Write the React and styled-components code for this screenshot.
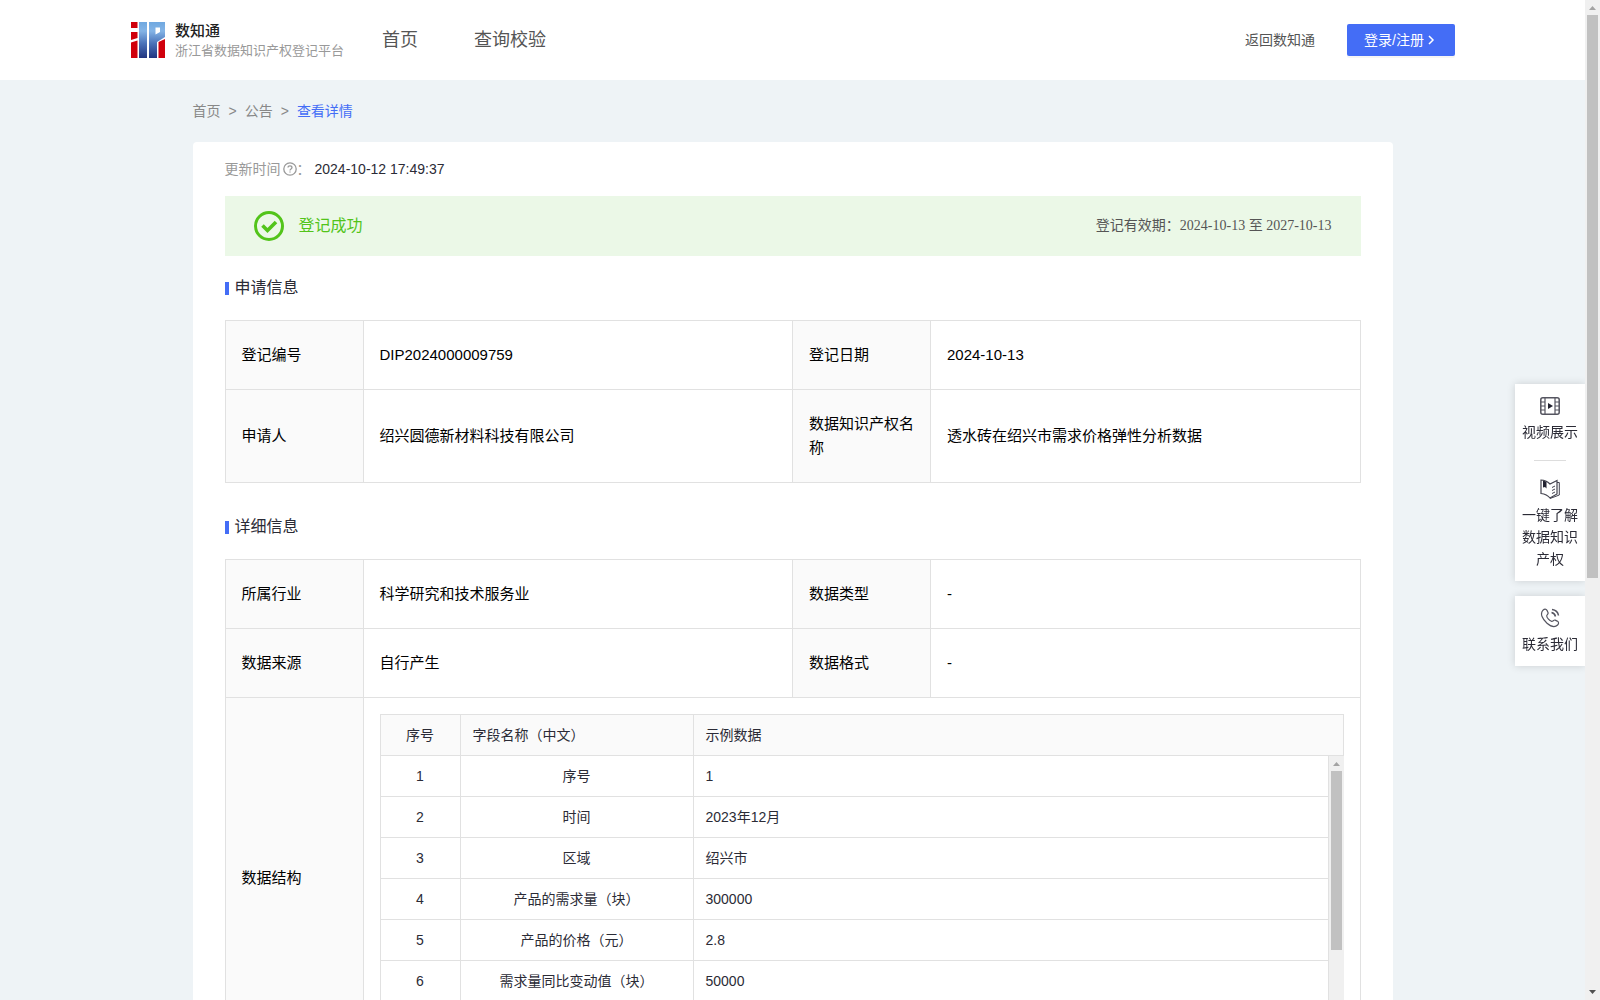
import React from 'react';
import styled, { createGlobalStyle } from 'styled-components';

const sans = '"Liberation Sans", "Noto Sans CJK SC", sans-serif';
const serif = '"Liberation Serif", "Noto Sans CJK SC", serif';

const GlobalStyle = createGlobalStyle`
  * {
    box-sizing: border-box;
  }
  body {
    margin: 0;
    background: #eef3f6;
    color: #2b2b36;
    font: 14px/22px ${sans};
  }
  a {
    color: inherit;
    text-decoration: none;
  }
`;

const Viewport = styled.div`
  display: flex;
  height: 100vh;
`;

const Page = styled.div`
  flex: 1;
  min-width: 0;
  overflow-y: auto;
  scrollbar-width: none;
`;

const ScrollTrack = styled.div`
  display: flex;
  flex: none;
  flex-direction: column;
  width: 15px;
  background: #f0f0f0;

  svg {
    flex: none;
  }
`;

const ThumbArea = styled.div`
  flex: 1;
  padding: 0 2px;
`;

const Thumb = styled.div`
  height: ${(p) => p.$size};
  background: #c1c1c1;
`;

const Header = styled.header`
  display: flex;
  align-items: center;
  height: 80px;
  padding: 0 130px;
  background: #fff;
`;

const Brand = styled.a`
  display: flex;
  align-items: center;
  gap: 10px;
`;

const BrandText = styled.div`
  font-family: "Noto Sans CJK SC", sans-serif;
  font-size: 13px;
  line-height: 20px;
  color: #999;
  white-space: nowrap;

  strong {
    display: block;
    font-size: 15px;
    font-weight: 500;
    color: #222;
  }
`;

const Nav = styled.nav`
  display: flex;
  flex: 1;
  gap: 56px;
  margin-left: 38px;
  font-size: 18px;
  color: #555;
`;

const BackLink = styled.a`
  margin-right: 32px;
  color: #555;
`;

const LoginButton = styled.button`
  display: flex;
  align-items: center;
  justify-content: center;
  width: 108px;
  height: 32px;
  padding: 0;
  border: 0;
  border-radius: 2px;
  background: #446df6;
  box-shadow: 0 2px 0 rgba(0, 0, 0, 0.04);
  color: #fff;
  font: 14px/22px ${sans};
  cursor: pointer;
`;

const Main = styled.main`
  width: 1200px;
  max-width: 100%;
  margin: 0 auto;
`;

const Breadcrumb = styled.nav`
  display: flex;
  gap: 8px;
  padding: 20px 0;
  color: #888;
`;

const Current = styled.span`
  color: #446df6;
`;

const Card = styled.article`
  padding: 16px 32px 32px;
  border-radius: 4px;
  background: #fff;
`;

const Updated = styled.div`
  display: flex;
  align-items: center;
  color: #999;

  svg {
    margin-left: 2px;
  }
  time {
    margin-left: 4px;
    color: #2b2b36;
  }
`;

const Banner = styled.div`
  display: flex;
  align-items: center;
  height: 60px;
  margin-top: 16px;
  padding: 0 29px;
  background: #ebf8e7;
`;

const Status = styled.strong`
  flex: 1;
  margin-left: 15px;
  font-size: 16px;
  font-weight: 400;
  color: #52c41a;
`;

const Validity = styled.span`
  font-family: ${serif};
  color: #555;
`;

const SectionTitle = styled.h2`
  display: flex;
  align-items: center;
  gap: 6px;
  margin: ${(p) => (p.$first ? 20 : 32)}px 0 20px;
  font-size: 16px;
  font-weight: 400;
  line-height: 24px;

  &::before {
    content: '';
    width: 4px;
    height: 13px;
    background: #446df6;
  }
`;

const InfoTable = styled.table`
  width: 100%;
  border-collapse: collapse;
  table-layout: fixed;
  font-size: 15px;
  line-height: 24px;
  color: #000;
`;

const Label = styled.th`
  width: 138px;
  padding: 22px 16px;
  border: 1px solid #e1e1e1;
  background: #fafafa;
  font-weight: 400;
  text-align: left;
`;

const Value = styled.td`
  padding: ${(p) => (p.$nested ? '16px' : '22px 16px')};
  border: 1px solid #e1e1e1;
`;

const Grid = styled.table`
  width: 100%;
  border-collapse: separate;
  border-spacing: 0;
  table-layout: fixed;
  font-size: 14px;
  line-height: 22px;
  color: #2b2b36;

  th,
  td {
    padding: 9px 12px;
    border: 0 solid #e1e1e1;
    border-width: 0 1px 1px 0;
    font-weight: 400;
    text-align: center;
  }
  th {
    background: #fafafa;
    border-top-width: 1px;
  }
  th + th,
  td:last-child {
    text-align: left;
  }
  th:first-child,
  td:first-child {
    border-left-width: 1px;
  }
`;

const GridBody = styled.div`
  display: flex;
  height: 286px;
`;

const GridRows = styled.div`
  flex: 1;
  min-width: 0;
`;

const Rail = styled.aside`
  position: fixed;
  top: 384px;
  right: 15px;
  display: flex;
  flex-direction: column;
  gap: 15px;
  width: 70px;
`;

const RailPanel = styled.div`
  background: #fff;
  box-shadow: 0 0 8px rgba(0, 0, 0, 0.15);
  clip-path: inset(-10px 0 -10px -10px);
`;

const RailLink = styled.a`
  display: flex;
  flex-direction: column;
  align-items: center;
  gap: 5px;
  padding: 12px 7px 11px;
  text-align: center;
`;

const Divider = styled.hr`
  width: 32px;
  height: 1px;
  margin: 6px auto;
  border: 0;
  background: #ddd;
`;

const Logo = () => (
  <svg width="35" height="36" viewBox="0 0 35 36" aria-hidden="true">
    <defs>
      <linearGradient id="brandBlue" gradientUnits="userSpaceOnUse" x1="0" y1="0" x2="0" y2="36">
        <stop offset="0" stopColor="#6fa8e0" />
        <stop offset="0.25" stopColor="#84b4e6" />
        <stop offset="0.6" stopColor="#4a72b8" />
        <stop offset="1" stopColor="#223580" />
      </linearGradient>
    </defs>
    <path d="M1 0h6.500v6H1zM1 10h6.500v6L1 18zM1 20.500l6.500-2V36H1zM28.500 20l6.500-3v19h-6.500z" fill="#d0000c" />
    <path d="M9 0h8v36H9z" fill="url(#brandBlue)" />
    <path
      d="M19 0h16v15l-8 5v16h-8zM25.500 5.500v7l4.500-2.500V5.500z"
      fillRule="evenodd"
      fill="url(#brandBlue)"
    />
  </svg>
);

const ChevronIcon = () => (
  <svg width="14" height="14" viewBox="0 0 14 14" fill="none" stroke="currentColor" strokeWidth="1.5" aria-hidden="true">
    <path d="M5 3l4 4-4 4" />
  </svg>
);

const HelpIcon = () => (
  <svg width="14" height="14" viewBox="0 0 14 14" fill="none" stroke="currentColor" strokeWidth="1.3" aria-hidden="true">
    <circle cx="7" cy="7" r="6.2" />
    <path d="M5 5.6c0-2.4 4-2.4 4 0 0 1.4-2 1.3-2 2.8M7 9.4v1.2" />
  </svg>
);

const SuccessIcon = () => (
  <svg width="30" height="30" viewBox="0 0 30 30" fill="none" stroke="#52c41a" aria-hidden="true">
    <circle cx="15" cy="15" r="13.5" strokeWidth="3" />
    <path d="M8.5 14.5l5 5 8.500-8.500" strokeWidth="3.6" />
  </svg>
);

const VideoIcon = () => (
  <svg width="20" height="20" viewBox="0 0 20 20" fill="none" stroke="#555560" aria-hidden="true">
    <rect x="0.8" y="1.8" width="18.4" height="16.4" rx="2" strokeWidth="1.5" />
    <path d="M5 2v16M15 2v16M1 6h4M1 10h4M1 14h4M15 6h4M15 10h4M15 14h4" strokeWidth="1.2" />
    <path d="M8 7l5 3-5 3z" fill="#222230" stroke="none" />
  </svg>
);

const BookIcon = () => (
  <svg width="20" height="20" viewBox="0 0 20 20" fill="none" stroke="#444450" aria-hidden="true">
    <path d="M17 1.5L10 5C8 3 4 1 1 1v13.5c4 .5 7 2 9 4.500l7-4z" strokeWidth="1.2" />
    <path d="M17 3.5h2.300V16L10 19.5M12 8.5l3-1.500M12 11.5l3-1.500M12 14.5l3-1.500" />
    <path d="M3 1.5l3.500 1.200V9.500L5 8 3 8.500z" fill="#222230" stroke="none" />
  </svg>
);

const PhoneIcon = () => (
  <svg width="20" height="20" viewBox="0 0 20 20" fill="none" stroke="#555560" strokeWidth="1.2" aria-hidden="true">
    <path d="M3 2.2C4.5.8 6 .8 7 2.4l1 2c.8 1.6-1.5 2.4-1.3 3.6.3 2 2.8 4.7 4.8 5.3 1.5.4 2.2-1.8 3.7-1.2l2 1c1.8 1 1.7 2.6.4 3.9-2.4 2.3-6.5 1.7-10.6-1.8C2.5 11.2-.4 5.8 3 2.2z" />
    <path d="M11.5 4.5c2 .4 3.5 1.8 4 4M12 1.5c3.5.4 6 2.8 6.5 6" strokeWidth="1.5" />
  </svg>
);

const applyRows = [
  ['登记编号', 'DIP2024000009759', '登记日期', '2024-10-13'],
  ['申请人', '绍兴圆德新材料科技有限公司', '数据知识产权名称', '透水砖在绍兴市需求价格弹性分析数据'],
];

const detailRows = [
  ['所属行业', '科学研究和技术服务业', '数据类型', '-'],
  ['数据来源', '自行产生', '数据格式', '-'],
];

const fields = [
  ['序号', '1'],
  ['时间', '2023年12月'],
  ['区域', '绍兴市'],
  ['产品的需求量（块）', '300000'],
  ['产品的价格（元）', '2.8'],
  ['需求量同比变动值（块）', '50000'],
];

function ScrollBar({ size }) {
  return (
    <ScrollTrack aria-hidden="true">
      <svg width="15" height="15" viewBox="0 0 15 15">
        <path d="M7.5 6L11 10H4z" fill="#a3a3a3" />
      </svg>
      <ThumbArea>
        <Thumb $size={size} />
      </ThumbArea>
      <svg width="15" height="15" viewBox="0 0 15 15">
        <path d="M4 5h7L7.5 9z" fill="#505050" />
      </svg>
    </ScrollTrack>
  );
}

function InfoRow({ cells }) {
  const [labelA, valueA, labelB, valueB] = cells;
  return (
    <tr>
      <Label scope="row">{labelA}</Label>
      <Value>{valueA}</Value>
      <Label scope="row">{labelB}</Label>
      <Value>{valueB}</Value>
    </tr>
  );
}

const IndexCol = styled.col`
  width: 81px;
`;

const NameCol = styled.col`
  width: 233px;
`;

const GridColumns = () => (
  <colgroup>
    <IndexCol />
    <NameCol />
    <col />
  </colgroup>
);

function FieldGrid() {
  return (
    <>
      <Grid>
        <GridColumns />
        <thead>
          <tr>
            <th scope="col">序号</th>
            <th scope="col">字段名称（中文）</th>
            <th scope="col">示例数据</th>
          </tr>
        </thead>
      </Grid>
      <GridBody>
        <GridRows>
          <Grid>
            <GridColumns />
            <tbody>
              {fields.map(([name, sample], i) => (
                <tr key={name}>
                  <td>{i + 1}</td>
                  <td>{name}</td>
                  <td>{sample}</td>
                </tr>
              ))}
            </tbody>
          </Grid>
        </GridRows>
        <ScrollBar size="70%" />
      </GridBody>
    </>
  );
}

function App() {
  return (
    <>
      <GlobalStyle />
      <Viewport>
        <Page>
          <Header>
            <Brand href="#">
              <Logo />
              <BrandText>
                <strong>数知通</strong>
                浙江省数据知识产权登记平台
              </BrandText>
            </Brand>
            <Nav>
              <a href="#">首页</a>
              <a href="#">查询校验</a>
            </Nav>
            <BackLink href="#">返回数知通</BackLink>
            <LoginButton type="button">
              登录/注册
              <ChevronIcon />
            </LoginButton>
          </Header>
          <Main>
            <Breadcrumb>
              <a href="#">首页</a>
              <span>&gt;</span>
              <a href="#">公告</a>
              <span>&gt;</span>
              <Current>查看详情</Current>
            </Breadcrumb>
            <Card>
              <Updated>
                更新时间
                <HelpIcon />
                ：
                <time>2024-10-12 17:49:37</time>
              </Updated>
              <Banner>
                <SuccessIcon />
                <Status>登记成功</Status>
                <Validity>登记有效期：2024-10-13 至 2027-10-13</Validity>
              </Banner>
              <SectionTitle $first>申请信息</SectionTitle>
              <InfoTable>
                <tbody>
                  {applyRows.map((row) => (
                    <InfoRow key={row[0]} cells={row} />
                  ))}
                </tbody>
              </InfoTable>
              <SectionTitle>详细信息</SectionTitle>
              <InfoTable>
                <tbody>
                  {detailRows.map((row) => (
                    <InfoRow key={row[0]} cells={row} />
                  ))}
                  <tr>
                    <Label scope="row">数据结构</Label>
                    <Value colSpan={3} $nested>
                      <FieldGrid />
                    </Value>
                  </tr>
                </tbody>
              </InfoTable>
            </Card>
          </Main>
        </Page>
        <ScrollBar size="58%" />
      </Viewport>
      <Rail>
        <RailPanel>
          <RailLink href="#">
            <VideoIcon />
            视频展示
          </RailLink>
          <Divider />
          <RailLink href="#">
            <BookIcon />
            一键了解数据知识产权
          </RailLink>
        </RailPanel>
        <RailPanel>
          <RailLink href="#">
            <PhoneIcon />
            联系我们
          </RailLink>
        </RailPanel>
      </Rail>
    </>
  );
}

export default App;
